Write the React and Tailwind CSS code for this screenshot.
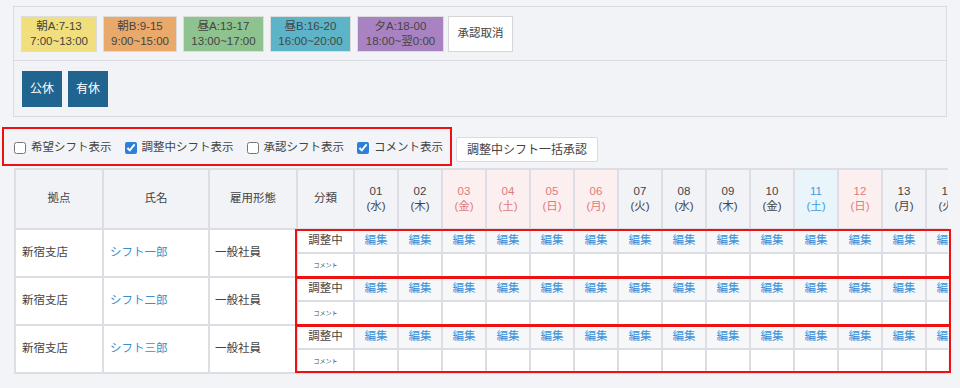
import React from 'react';

const shifts = [
  { top: '朝A:7-13', bottom: '7:00~13:00', cls: 'w-[76px] bg-[#f0df7c]' },
  { top: '朝B:9-15', bottom: '9:00~15:00', cls: 'w-[74px] bg-[#e9a96b]' },
  { top: '昼A:13-17', bottom: '13:00~17:00', cls: 'w-[81px] bg-[#8ec28f]' },
  { top: '昼B:16-20', bottom: '16:00~20:00', cls: 'w-[81px] bg-[#5db4c8]' },
  { top: '夕A:18-00', bottom: '18:00~翌0:00', cls: 'w-[87px] bg-[#a983c1]' },
];

const weekdays = ['水', '木', '金', '土', '日', '月', '火'];
const holidays = ['03', '04', '05', '06'];

const days = Array.from({ length: 20 }, (_, i) => {
  const d = (i + 1).toString().padStart(2, '0');
  const w = weekdays[i % 7];
  let kind = 'normal';
  if (holidays.includes(d) || w === '日') kind = 'red';
  else if (w === '土') kind = 'blue';
  return { d, w, kind };
});

const headStyle = {
  normal: 'bg-[#f2f3f6] text-[#444]',
  red: 'bg-[#fcefef] text-[#e07b7b]',
  blue: 'bg-[#eaf4fb] text-[#3f9ddf]',
};

const staff = ['シフト一郎', 'シフト二郎', 'シフト三郎'];

const cell = 'border-2 border-[#dcdee3]';

const Check = ({ checked, label }) => (
  <label className="flex items-center gap-[5px]">
    <input
      type="checkbox"
      defaultChecked={checked}
      className="w-[12px] h-[12px] m-0 accent-[#2d7fd8]"
    />
    <span>{label}</span>
  </label>
);

export default function App() {
  return (
    <div className="w-[960px] h-[388px] overflow-hidden bg-[#f3f4f7] text-[#444] font-['Liberation_Sans','Noto_Sans_CJK_JP',sans-serif] pt-[6px]">
      {/* shift palette panel */}
      <div className="ml-[13px] w-[934px] border border-[#d9dbe0] bg-[#f2f3f6]">
        <div className="flex items-center gap-[6px] px-[7px] h-[54px] border-b border-[#d9dbe0]">
          {shifts.map((s) => (
            <div
              key={s.top}
              className={`${s.cls} h-[36px] border border-[#dcdcdc] flex flex-col items-center justify-center text-[11.5px] leading-[15px] text-[#444]`}
            >
              <span>{s.top}</span>
              <span>{s.bottom}</span>
            </div>
          ))}
          <div className="w-[65px] h-[36px] ml-[-2px] border border-[#d6d6d6] bg-white flex items-center justify-center text-[11.5px]">
            承認取消
          </div>
        </div>
        <div className="flex items-center gap-[6px] px-[8px] h-[55px]">
          <div className="w-[40px] h-[36px] bg-[#1f6590] text-white text-[12px] flex items-center justify-center">公休</div>
          <div className="w-[40px] h-[36px] bg-[#1f6590] text-white text-[12px] flex items-center justify-center">有休</div>
        </div>
      </div>

      {/* display toggles */}
      <div className="flex items-start mt-[10px] ml-[2px] gap-[4px]">
        <div className="w-[450px] h-[39px] border-2 border-[#ee1111] flex items-center gap-[13px] pl-[10px] pt-[2px] text-[11.5px]">
          <Check label="希望シフト表示" />
          <Check checked label="調整中シフト表示" />
          <Check label="承認シフト表示" />
          <Check checked label="コメント表示" />
        </div>
        <button className="mt-[10px] w-[142px] h-[25px] bg-white border border-[#d9dbe0] rounded-[2px] text-[12px] text-[#444]">
          調整中シフト一括承認
        </button>
      </div>

      {/* shift table */}
      <div className="relative mt-[2px]">
        <div className="ml-[14px] w-[934px] overflow-hidden">
          <table className="table-fixed border-collapse w-[1219px] text-[11.5px]">
            <thead>
              <tr>
                <th className={`${cell} w-[88px] h-[60px] bg-[#f2f3f6] font-normal`}>拠点</th>
                <th className={`${cell} w-[106px] bg-[#f2f3f6] font-normal`}>氏名</th>
                <th className={`${cell} w-[88px] bg-[#f2f3f6] font-normal`}>雇用形態</th>
                <th className={`${cell} w-[57px] bg-[#f2f3f6] font-normal`}>分類</th>
                {days.map((d) => (
                  <th key={d.d} className={`${cell} w-[44px] font-normal leading-[15px] ${headStyle[d.kind]}`}>
                    <div>{d.d}</div>
                    <div>({d.w})</div>
                  </th>
                ))}
              </tr>
            </thead>
            <tbody>
              {staff.map((name) => (
                <React.Fragment key={name}>
                  <tr>
                    <td rowSpan={2} className={`${cell} bg-white pl-[6px]`}>新宿支店</td>
                    <td rowSpan={2} className={`${cell} bg-white pl-[6px] text-[#3b8fd0]`}>{name}</td>
                    <td rowSpan={2} className={`${cell} bg-white pl-[5px]`}>一般社員</td>
                    <td className={`${cell} h-[24px] bg-white text-center`}>調整中</td>
                    {days.map((d) => (
                      <td key={d.d} className={`${cell} bg-[#f6f7f9] text-center text-[#3a8ed9]`}>編集</td>
                    ))}
                  </tr>
                  <tr>
                    <td className={`${cell} h-[24px] bg-white text-center text-[6px]`}>コメント</td>
                    {days.map((d) => (
                      <td key={d.d} className={`${cell} bg-white`}></td>
                    ))}
                  </tr>
                </React.Fragment>
              ))}
            </tbody>
          </table>
        </div>
        {/* red highlight boxes */}
        <div className="absolute left-[295px] top-[61px] w-[656px] h-[49px] border-2 border-[#ee1111]"></div>
        <div className="absolute left-[295px] top-[109px] w-[656px] h-[49px] border-2 border-[#ee1111]"></div>
        <div className="absolute left-[295px] top-[157px] w-[656px] h-[48px] border-2 border-[#ee1111]"></div>
      </div>
    </div>
  );
}
